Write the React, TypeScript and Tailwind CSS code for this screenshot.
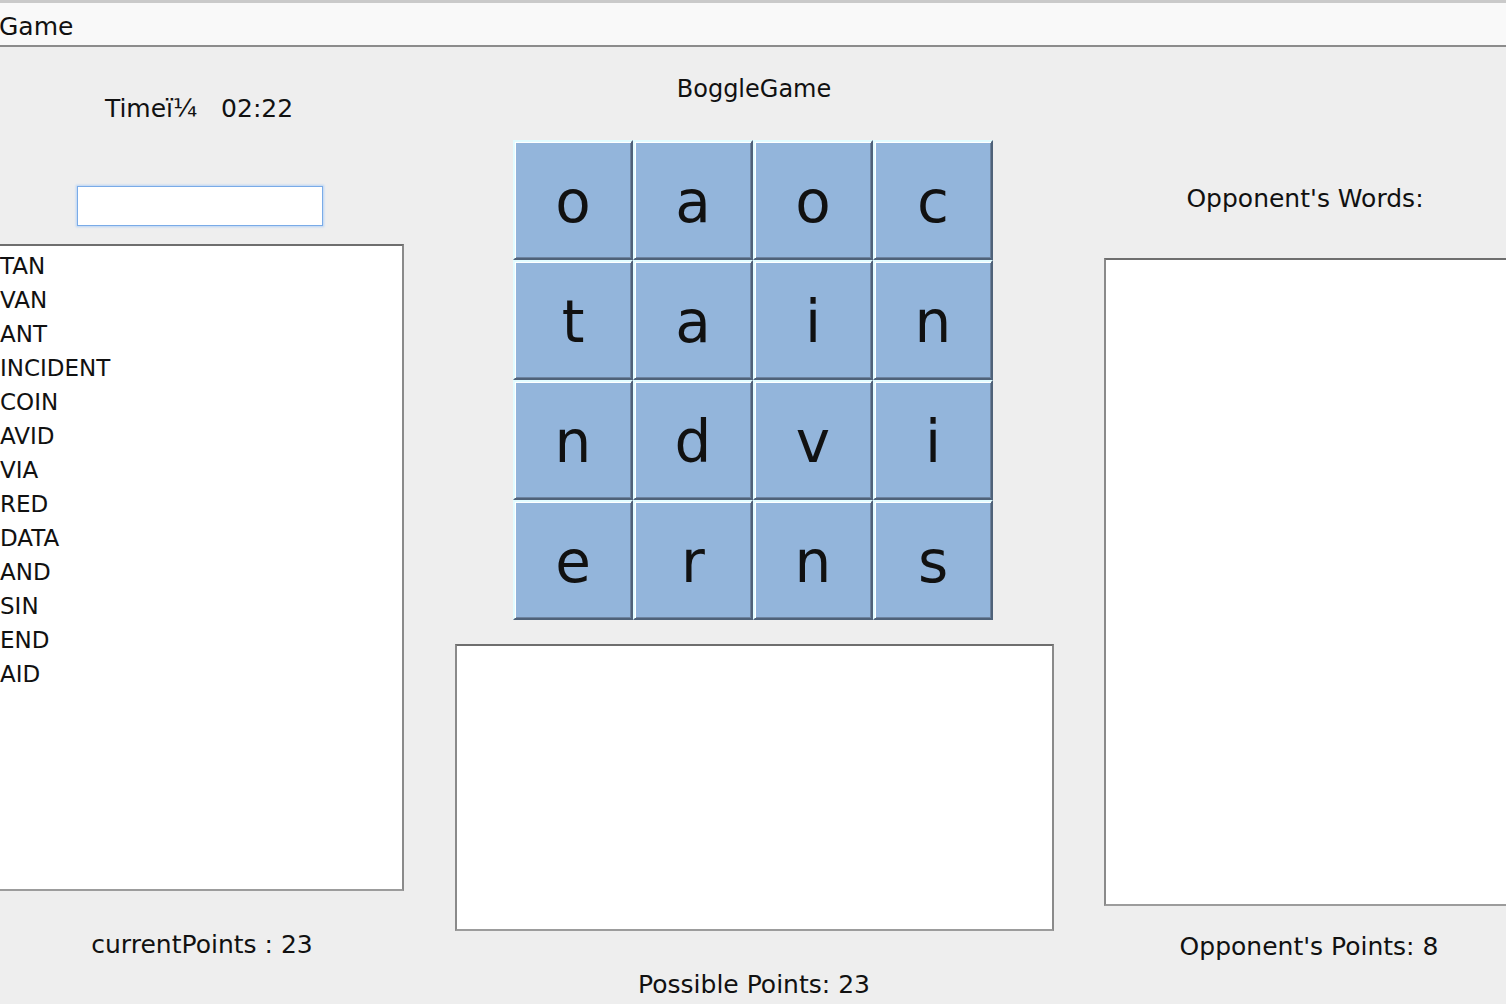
import React from 'react';

const board = [
  ['o', 'a', 'o', 'c'],
  ['t', 'a', 'i', 'n'],
  ['n', 'd', 'v', 'i'],
  ['e', 'r', 'n', 's'],
];

const myWords = ['TAN', 'VAN', 'ANT', 'INCIDENT', 'COIN', 'AVID', 'VIA', 'RED', 'DATA', 'AND', 'SIN', 'END', 'AID'];

// sunken white list area, Swing style
const boxClass =
  'bg-white border-2 border-t-[#6e6e6e] border-l-[#8a8a8a] border-r-[#8a8a8a] border-b-[#9c9c9c]';

function Tile({ letter }: { letter: string }) {
  return (
    <div className="h-[120px] w-[120px] flex items-center justify-center bg-[#93b5db] border-2 border-t-[#e2fcff] border-l-[#e2fcff] border-r-[#4f6279] border-b-[#4f6279] shadow-[inset_1px_1px_0_#ffffff,inset_-1px_-1px_0_#6d839f]">
      <span className="text-[58px] leading-[58px] pt-[4px] text-[#111]">{letter}</span>
    </div>
  );
}

export default function App() {
  return (
    <div
      className="w-[1506px] h-[1004px] bg-[#eeeeee] overflow-hidden flex flex-col text-[#111]"
      style={{ fontFamily: '"DejaVu Sans", "Liberation Sans", sans-serif' }}
    >
      {/* Menu bar */}
      <div className="h-[47px] shrink-0 bg-[#f9f9f9] border-t-[3px] border-t-[#cacaca] border-b-2 border-b-[#8c8c8c]">
        <div className="pt-[6px] leading-[36px] text-[25px] -ml-[1px]">Game</div>
      </div>

      <div className="flex flex-1">
        {/* Left: timer, input, found words */}
        <div className="w-[404px] shrink-0 flex flex-col items-center">
          <div className="mt-[47px] h-[30px] leading-[30px] text-[25px] whitespace-pre mr-[6px]">{'Timeï¼   02:22'}</div>
          <input
            type="text"
            className="mt-[62px] h-[40px] w-[246px] mr-[4px] bg-white border border-[#7aabe7] shadow-[0_0_2px_1px_#b7d4f6] outline-none"
          />
          <div className={`mt-[18px] self-stretch -ml-[2px] h-[647px] pt-[3px] ${boxClass}`}>
            {myWords.map((w) => (
              <div key={w} className="text-[23px] leading-[34px]">{w}</div>
            ))}
          </div>
          <div className="mt-[39px] h-[30px] leading-[30px] text-[25px] whitespace-pre">currentPoints : 23</div>
        </div>

        {/* Middle: title, board, message area */}
        <div className="w-[700px] shrink-0 flex flex-col items-center">
          <div className="mt-[27px] h-[30px] leading-[30px] text-[24px]">BoggleGame</div>
          <div className="mt-[36px] grid grid-cols-4 w-[480px] mr-[2px]">
            {board.flat().map((l, i) => (
              <Tile key={i} letter={l} />
            ))}
          </div>
          <div className={`mt-[24px] w-[599px] h-[287px] ${boxClass}`} />
          <div className="mt-[39px] h-[30px] leading-[30px] text-[25px]">Possible Points: 23</div>
        </div>

        {/* Right: opponent */}
        <div className="w-[402px] shrink-0 flex flex-col items-center">
          <div className="mt-[137px] h-[30px] leading-[30px] text-[25px]">Opponent's Words:</div>
          <div className={`mt-[44px] self-stretch -mr-[4px] h-[648px] ${boxClass}`} />
          <div className="mt-[26px] h-[30px] leading-[30px] text-[25px] pl-[8px]">Opponent's Points: 8</div>
        </div>
      </div>
    </div>
  );
}
